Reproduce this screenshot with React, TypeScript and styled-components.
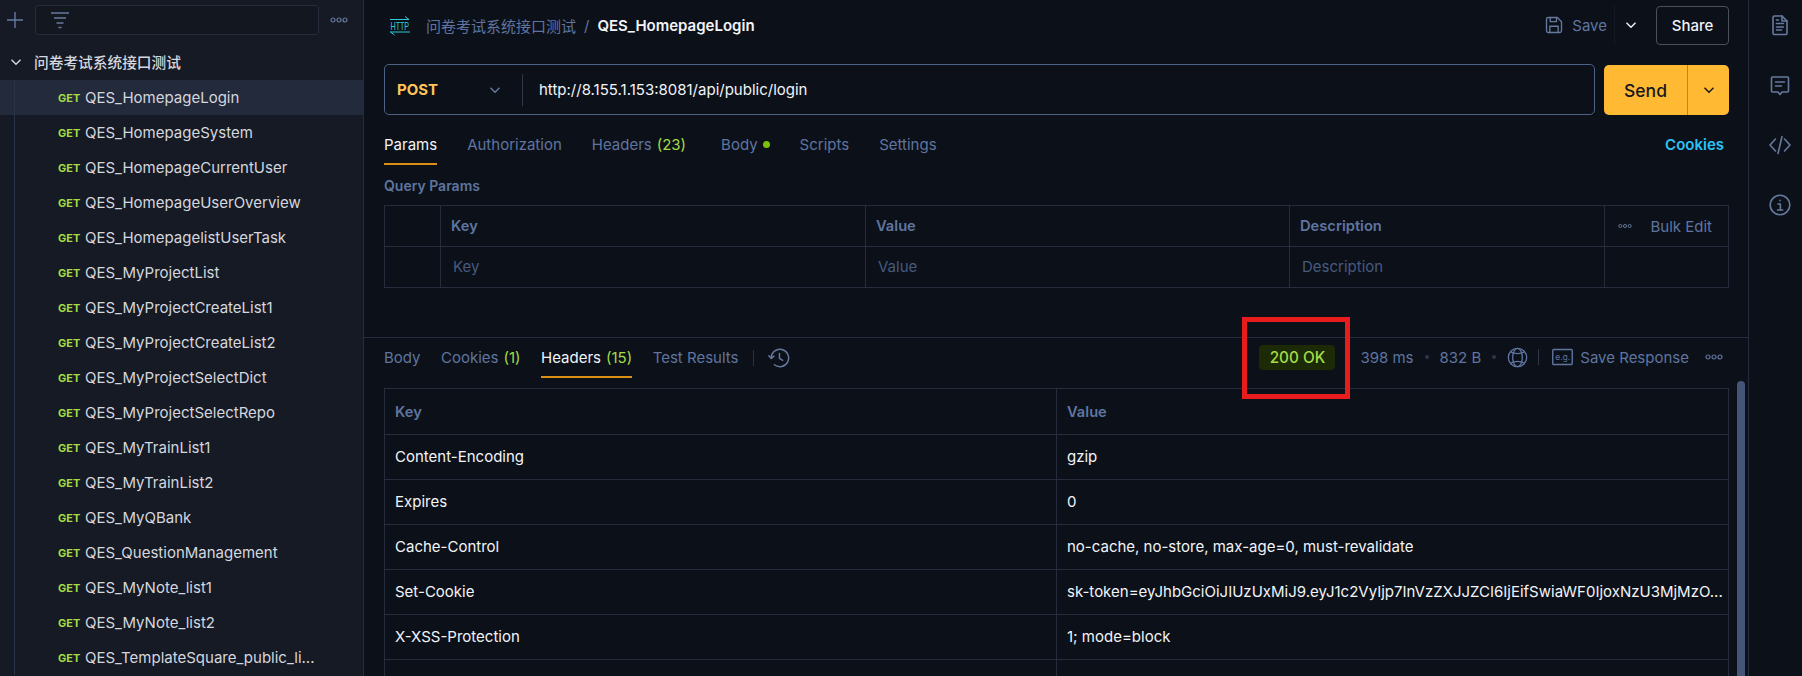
import React from 'react';
import styled, { createGlobalStyle } from 'styled-components';

const colors = {
  bg: '#0c1018',
  side: '#161a24',
  selected: '#232a3c',
  line: '#262c3b',
  muted: '#5f75a0',
  icon: '#667a9e',
  text: '#f2f4f8',
  soft: '#d4d7df',
  green: '#a3dc45',
  yellow: '#ffb933',
};

const GlobalStyle = createGlobalStyle`
  html, body {
    margin: 0;
    height: 100%;
    overflow: hidden;
    background: ${colors.bg};
    font-family: Inter, "Noto Sans CJK SC", sans-serif;
  }
  * { box-sizing: border-box; }
`;

const Page = styled.div`
  position: relative;
  display: flex;
  width: 1802px;
  height: 676px;
  overflow: hidden;
`;

const Sidebar = styled.aside`
  width: 364px;
  flex: none;
  background: ${colors.side};
  border-right: 1px solid ${colors.line};
  overflow: hidden;
`;

const SideTop = styled.div`
  display: flex;
  align-items: center;
  height: 30px;
  margin: 5px 0 10px;
  padding: 0 0 0 7px;
`;

const IconSlot = styled.span`
  display: inline-flex;
  flex: none;
  color: ${colors.icon};
`;

const SearchBox = styled.div`
  width: 284px;
  height: 30px;
  margin-left: 12px;
  padding-left: 14px;
  display: flex;
  align-items: center;
  border: 1px solid ${colors.line};
  border-radius: 3px;
  background: #13171f;
`;

const SideDots = styled.span`
  display: inline-flex;
  margin-left: 11px;
  color: ${colors.icon};
`;

const FolderRow = styled.div`
  display: flex;
  align-items: center;
  height: 35px;
  padding: 0 0 2px 9px;
  font-size: 14.7px;
  font-weight: 500;
  color: ${colors.soft};
`;

const FolderName = styled.span`
  margin-left: 11px;
`;

const ReqRow = styled.div<{ $active?: boolean }>`
  position: relative;
  display: flex;
  align-items: center;
  height: 35px;
  padding-left: 58px;
  background: ${(p) => (p.$active ? colors.selected : 'transparent')};

  &::before {
    content: '';
    position: absolute;
    left: 14px;
    top: 0;
    bottom: 0;
    width: 1px;
    background: #2a3448;
  }
`;

const GetTag = styled.span`
  width: 27px;
  font-size: 11px;
  font-weight: 700;
  color: ${colors.green};
`;

const ReqName = styled.span`
  font-size: 15px;
  color: ${colors.soft};
  white-space: nowrap;
`;

const Main = styled.main`
  flex: 1;
  min-width: 0;
  display: flex;
  flex-direction: column;
`;

const RequestPane = styled.section`
  height: 338px;
  flex: none;
  padding: 0 19px 0 20px;
  border-bottom: 1px solid ${colors.line};
`;

const TopBar = styled.header`
  display: flex;
  align-items: center;
  height: 50px;
  margin-bottom: 14px;
`;

const HttpSlot = styled.span`
  display: inline-flex;
  margin-left: 5px;
`;

const Crumb = styled.span`
  margin-left: 15px;
  font-size: 15px;
  color: ${colors.muted};
  white-space: nowrap;
`;

const CrumbSep = styled.span`
  margin: 0 8px;
  font-size: 15px;
  color: ${colors.muted};
`;

const CrumbName = styled.span`
  font-size: 15px;
  font-weight: 600;
  color: ${colors.text};
`;

const TopActions = styled.div`
  margin-left: auto;
  display: flex;
  align-items: center;
  color: ${colors.text};
`;

const SaveLabel = styled.span`
  margin-left: 8px;
  font-size: 15px;
  color: ${colors.muted};
`;

const SaveSplit = styled.span`
  width: 1px;
  height: 40px;
  margin: 0 9px 0 7px;
  background: #141823;
`;

const ShareButton = styled.button`
  width: 73px;
  height: 39px;
  margin-left: 18px;
  border: 1px solid #4a505c;
  border-radius: 4px;
  background: transparent;
  color: ${colors.text};
  font: 500 15px Inter, sans-serif;
`;

const UrlRow = styled.div`
  display: flex;
  gap: 9px;
`;

const UrlBar = styled.div`
  flex: 1;
  height: 51px;
  display: flex;
  align-items: center;
  border: 1px solid #4d6286;
  border-radius: 5px;
`;

const MethodSelect = styled.div`
  width: 138px;
  height: 32px;
  display: flex;
  align-items: center;
  justify-content: space-between;
  padding: 0 20px 0 12px;
  border-right: 1px solid #2f3645;
  color: #ffc557;
  font-size: 15px;
  font-weight: 700;
`;

const UrlText = styled.span`
  margin-left: 16px;
  font-size: 15px;
  color: ${colors.text};
`;

const SendButton = styled.div`
  width: 125px;
  height: 50px;
  margin-top: 1px;
  display: flex;
  border-radius: 5px;
  background: ${colors.yellow};
  color: #15181e;
`;

const SendLabel = styled.span`
  width: 84px;
  display: flex;
  align-items: center;
  justify-content: center;
  border-right: 1px solid #a98a45;
  font-size: 17.5px;
  font-weight: 500;
`;

const SendArrow = styled.span`
  flex: 1;
  display: flex;
  align-items: center;
  justify-content: center;
`;

const TabRow = styled.nav<{ $gap: number }>`
  display: flex;
  align-items: stretch;
  gap: ${(p) => p.$gap}px;
  height: 40px;
`;

const Tab = styled.span<{ $active?: boolean; $push?: number }>`
  position: relative;
  display: flex;
  align-items: center;
  gap: 5px;
  margin-left: ${(p) => p.$push ?? 0}px;
  padding-bottom: 2px;
  font-size: 15px;
  white-space: nowrap;
  color: ${(p) => (p.$active ? colors.text : colors.muted)};
  box-shadow: ${(p) => (p.$active ? `inset 0 -2px 0 #d98f14` : 'none')};
`;

const Count = styled.span`
  color: ${colors.green};
`;

const ActivityDot = styled.i`
  width: 7px;
  height: 7px;
  border-radius: 50%;
  background: #7cc107;
`;

const CookiesLink = styled.span`
  margin-left: auto;
  margin-right: 5px;
  align-self: center;
  padding-bottom: 2px;
  font-size: 15px;
  font-weight: 600;
  color: #2cc1f7;
`;

const RequestTabs = styled(TabRow)`
  margin-top: 10px;
`;

const SectionLabel = styled.div`
  height: 40px;
  padding-top: 12px;
  font-size: 14px;
  font-weight: 600;
  color: ${colors.muted};
`;

const Grid = styled.div<{ $cols: string }>`
  display: grid;
  grid-template-columns: ${(p) => p.$cols};
  border-top: 1px solid ${colors.line};
  border-left: 1px solid ${colors.line};
`;

const Cell = styled.div<{ $h: number; $head?: boolean; $placeholder?: boolean }>`
  height: ${(p) => p.$h}px;
  display: flex;
  align-items: center;
  min-width: 0;
  padding: 0 9px ${(p) => (p.$head ? 0 : 2)}px ${(p) => (p.$placeholder ? 12 : 10)}px;
  border-right: 1px solid ${colors.line};
  border-bottom: 1px solid ${colors.line};
  font-size: ${(p) => (p.$head ? 14.7 : 15)}px;
  font-weight: ${(p) => (p.$head ? 600 : 400)};
  color: ${(p) => (p.$head ? colors.muted : p.$placeholder ? '#465a80' : colors.text)};
`;

const CellText = styled.span`
  white-space: nowrap;
`;

const BulkCell = styled(Cell)`
  justify-content: flex-end;
  gap: 18px;
  padding-right: 16px;
  font-size: 15px;
  font-weight: 400;
`;

const ResponsePane = styled.section`
  position: relative;
  flex: 1;
  min-height: 0;
  padding: 0 19px 0 20px;
`;

const ResponseBar = styled.div`
  display: flex;
  align-items: stretch;
  height: 40px;
  margin-bottom: 10px;
`;

const TabDivider = styled.span`
  align-self: center;
  width: 1px;
  height: 16px;
  margin: 0 14px 0 15px;
  background: #2a3040;
`;

const HistorySlot = styled(IconSlot)`
  align-self: center;
`;

const StatusGroup = styled.div`
  margin-left: auto;
  margin-right: 6px;
  padding-bottom: 2px;
  display: flex;
  align-items: center;
  font-size: 15px;
  color: ${colors.muted};
`;

const StatusPill = styled.span`
  width: 76px;
  height: 25px;
  margin-right: 25px;
  display: flex;
  align-items: center;
  justify-content: center;
  border-radius: 4px;
  background: #1c2a06;
  color: ${colors.green};
  font-size: 15.3px;
  font-weight: 500;
`;

const MetaDot = styled.i`
  width: 4px;
  height: 4px;
  margin: 0 11px;
  border-radius: 50%;
  background: #2c3549;
`;

const MetaSep = styled.span`
  width: 1px;
  height: 16px;
  margin: 0 13px 0 10px;
  background: #2f3646;
`;

const SaveResponse = styled.span`
  margin: 0 16px 0 7px;
`;

const Annotation = styled.div`
  position: absolute;
  left: 1242px;
  top: 317px;
  width: 108px;
  height: 82px;
  border: 5px solid #e81c1c;
  pointer-events: none;
`;

const ScrollThumb = styled.div`
  position: absolute;
  right: 3px;
  top: 43px;
  bottom: 0;
  width: 8px;
  border-radius: 4px 4px 0 0;
  background: #455578;
`;

const Rail = styled.aside`
  width: 54px;
  flex: none;
  display: flex;
  flex-direction: column;
  align-items: center;
  gap: 36px;
  padding: 13px 0 0 8px;
  border-left: 1px solid ${colors.line};
  color: ${colors.icon};
`;

type IconProps = { size?: number };

const Svg = ({ size = 24, children }: IconProps & { children: React.ReactNode }) => (
  <svg width={size} height={size} viewBox="0 0 24 24" fill="none" stroke="currentColor" strokeWidth="1.6" strokeLinecap="round" strokeLinejoin="round">
    {children}
  </svg>
);

const Chevron = ({ size = 14 }: IconProps) => (
  <svg width={size} height={size} viewBox="0 0 14 14" fill="none" stroke="currentColor" strokeWidth="1.4">
    <path d="M2.5 4.8 7 9.3l4.5-4.5" />
  </svg>
);

const Dots = ({ size = 18 }: IconProps) => (
  <svg width={size} height={8} viewBox="0 0 18 8" fill="none" stroke="currentColor" strokeWidth="1.2">
    <circle cx="3" cy="4" r="2" />
    <circle cx="9" cy="4" r="2" />
    <circle cx="15" cy="4" r="2" />
  </svg>
);

const HttpIcon = () => (
  <svg width="22" height="22" viewBox="0 0 22 22" fill="none" stroke="#2bcbd8" strokeWidth="1">
    <path d="M1 5.500h19M16 2.500l4 3M1 18h20M1.500 18l4 3" />
    <text transform="translate(1.500 15.500) scale(.68 1)" fill="#2bcbd8" stroke="none" fontFamily="Liberation Sans, sans-serif" fontSize="10.500">HTTP</text>
  </svg>
);

const SaveIcon = () => (
  <Svg size={20}>
    <path d="M3 5a2 2 0 0 1 2-2h11l5 5v11a2 2 0 0 1-2 2H5a2 2 0 0 1-2-2z" />
    <path d="M7.500 3v5h7.500V3M7 21v-7.500h10V21" />
  </Svg>
);

const FilterIcon = () => (
  <svg width="20" height="18" viewBox="0 0 20 18" fill="none" stroke="currentColor" strokeWidth="1.5">
    <path d="M1 2h18M4 7h12M6.500 12h7M8.500 16.500h3" />
  </svg>
);

const PlusIcon = () => (
  <svg width="16" height="16" viewBox="0 0 16 16" fill="none" stroke="currentColor" strokeWidth="1.4">
    <path d="M8 0v16M0 8h16" />
  </svg>
);

const DocIcon = () => (
  <Svg>
    <path d="M5 4.500a1.500 1.500 0 0 1 1.500-1.500H14l5 5v12.500a1 1 0 0 1-1 1H6.500A1.500 1.500 0 0 1 5 20.500z" />
    <path d="M14 3v5h5M8.500 7h2M8.500 10.500h7M8.500 14h7M8.500 17h5" />
  </Svg>
);

const CommentIcon = () => (
  <Svg>
    <path d="M3.500 5a1 1 0 0 1 1-1h15a1 1 0 0 1 1 1v13a1 1 0 0 1-1 1h-5.500L12 21.500 10 19H4.500a1 1 0 0 1-1-1z" />
    <path d="M7.500 9h9M7.500 13h6" />
  </Svg>
);

const CodeIcon = () => (
  <Svg>
    <path d="M7.500 6 2 12l5.500 6M16.500 6 22 12l-5.500 6M14 3.500 10 20.500" />
  </Svg>
);

const InfoIcon = () => (
  <Svg>
    <circle cx="12" cy="12" r="9.800" />
    <path d="M10 11h2.400v6M9.500 17h5.200M12 7.200v.6" />
  </Svg>
);

const HistoryIcon = () => (
  <Svg size={22}>
    <path d="M3.500 12A9.500 9.500 0 1 1 7 19.400" />
    <path d="M1 9.500 3.600 12.500 6.500 10M12.500 7v5.500l3.500 2" />
  </Svg>
);

const GlobeIcon = () => (
  <svg width="21" height="21" viewBox="0 0 24 24" fill="none" stroke="currentColor" strokeWidth="1.500">
    <circle cx="12" cy="12" r="10.500" />
    <ellipse cx="12" cy="12" rx="5.500" ry="10.500" />
    <path d="M4 5.500Q12 9.500 20 5.500M4 18.500Q12 14.500 20 18.500" />
  </svg>
);

const ExampleIcon = () => (
  <svg width="21" height="18" viewBox="0 0 21 18" fill="none">
    <rect x=".75" y="1.500" width="19.500" height="15" rx="1" stroke="currentColor" strokeWidth="1.400" />
    <text x="3.200" y="11.800" fill="currentColor" fontFamily="Inter, sans-serif" fontSize="8.500">e.g.</text>
  </svg>
);

const requests = [
  'QES_HomepageLogin',
  'QES_HomepageSystem',
  'QES_HomepageCurrentUser',
  'QES_HomepageUserOverview',
  'QES_HomepagelistUserTask',
  'QES_MyProjectList',
  'QES_MyProjectCreateList1',
  'QES_MyProjectCreateList2',
  'QES_MyProjectSelectDict',
  'QES_MyProjectSelectRepo',
  'QES_MyTrainList1',
  'QES_MyTrainList2',
  'QES_MyQBank',
  'QES_QuestionManagement',
  'QES_MyNote_list1',
  'QES_MyNote_list2',
  'QES_TemplateSquare_public_li...',
];

const responseHeaders = [
  ['Content-Encoding', 'gzip'],
  ['Expires', '0'],
  ['Cache-Control', 'no-cache, no-store, max-age=0, must-revalidate'],
  ['Set-Cookie', 'sk-token=eyJhbGciOiJIUzUxMiJ9.eyJ1c2VyIjp7InVzZXJJZCI6IjEifSwiaWF0IjoxNzU3MjMzO...'],
  ['X-XSS-Protection', '1; mode=block'],
  ['', ''],
];

export default function App() {
  return (
    <Page>
      <GlobalStyle />
      <Sidebar>
        <SideTop>
          <IconSlot><PlusIcon /></IconSlot>
          <SearchBox>
            <IconSlot><FilterIcon /></IconSlot>
          </SearchBox>
          <SideDots><Dots /></SideDots>
        </SideTop>
        <FolderRow>
          <Chevron />
          <FolderName>问卷考试系统接口测试</FolderName>
        </FolderRow>
        {requests.map((name, i) => (
          <ReqRow key={name} $active={i === 0}>
            <GetTag>GET</GetTag>
            <ReqName>{name}</ReqName>
          </ReqRow>
        ))}
      </Sidebar>

      <Main>
        <RequestPane>
          <TopBar>
            <HttpSlot><HttpIcon /></HttpSlot>
            <Crumb>问卷考试系统接口测试</Crumb>
            <CrumbSep>/</CrumbSep>
            <CrumbName>QES_HomepageLogin</CrumbName>
            <TopActions>
              <IconSlot><SaveIcon /></IconSlot>
              <SaveLabel>Save</SaveLabel>
              <SaveSplit />
              <Chevron />
              <ShareButton>Share</ShareButton>
            </TopActions>
          </TopBar>

          <UrlRow>
            <UrlBar>
              <MethodSelect>
                POST
                <IconSlot><Chevron /></IconSlot>
              </MethodSelect>
              <UrlText>http://8.155.1.153:8081/api/public/login</UrlText>
            </UrlBar>
            <SendButton>
              <SendLabel>Send</SendLabel>
              <SendArrow><Chevron /></SendArrow>
            </SendButton>
          </UrlRow>

          <RequestTabs $gap={30}>
            <Tab $active>Params</Tab>
            <Tab>Authorization</Tab>
            <Tab>Headers <Count>(23)</Count></Tab>
            <Tab $push={5}>Body <ActivityDot /></Tab>
            <Tab>Scripts</Tab>
            <Tab>Settings</Tab>
            <CookiesLink>Cookies</CookiesLink>
          </RequestTabs>

          <SectionLabel>Query Params</SectionLabel>
          <Grid $cols="56px 425px 424px 315px 1fr">
            <Cell $h={41} $head />
            <Cell $h={41} $head>Key</Cell>
            <Cell $h={41} $head>Value</Cell>
            <Cell $h={41} $head>Description</Cell>
            <BulkCell $h={41} $head><IconSlot><Dots size={14} /></IconSlot>Bulk Edit</BulkCell>
            <Cell $h={41} />
            <Cell $h={41} $placeholder>Key</Cell>
            <Cell $h={41} $placeholder>Value</Cell>
            <Cell $h={41} $placeholder>Description</Cell>
            <Cell $h={41} />
          </Grid>
        </RequestPane>

        <ResponsePane>
          <ResponseBar>
            <TabRow $gap={20.5}>
              <Tab>Body</Tab>
              <Tab>Cookies <Count>(1)</Count></Tab>
              <Tab $active>Headers <Count>(15)</Count></Tab>
              <Tab>Test Results</Tab>
            </TabRow>
            <TabDivider />
            <HistorySlot><HistoryIcon /></HistorySlot>
            <StatusGroup>
              <StatusPill>200 OK</StatusPill>
              398 ms
              <MetaDot />
              832 B
              <MetaDot />
              <GlobeIcon />
              <MetaSep />
              <ExampleIcon />
              <SaveResponse>Save Response</SaveResponse>
              <Dots />
            </StatusGroup>
          </ResponseBar>
          <Grid $cols="672px 1fr">
            <Cell $h={46} $head>Key</Cell>
            <Cell $h={46} $head>Value</Cell>
            {responseHeaders.map(([key, value]) => (
              <React.Fragment key={key}>
                <Cell $h={45}><CellText>{key}</CellText></Cell>
                <Cell $h={45}><CellText>{value}</CellText></Cell>
              </React.Fragment>
            ))}
          </Grid>
          <ScrollThumb />
        </ResponsePane>
      </Main>

      <Rail>
        <DocIcon />
        <CommentIcon />
        <CodeIcon />
        <InfoIcon />
      </Rail>
      <Annotation />
    </Page>
  );
}
